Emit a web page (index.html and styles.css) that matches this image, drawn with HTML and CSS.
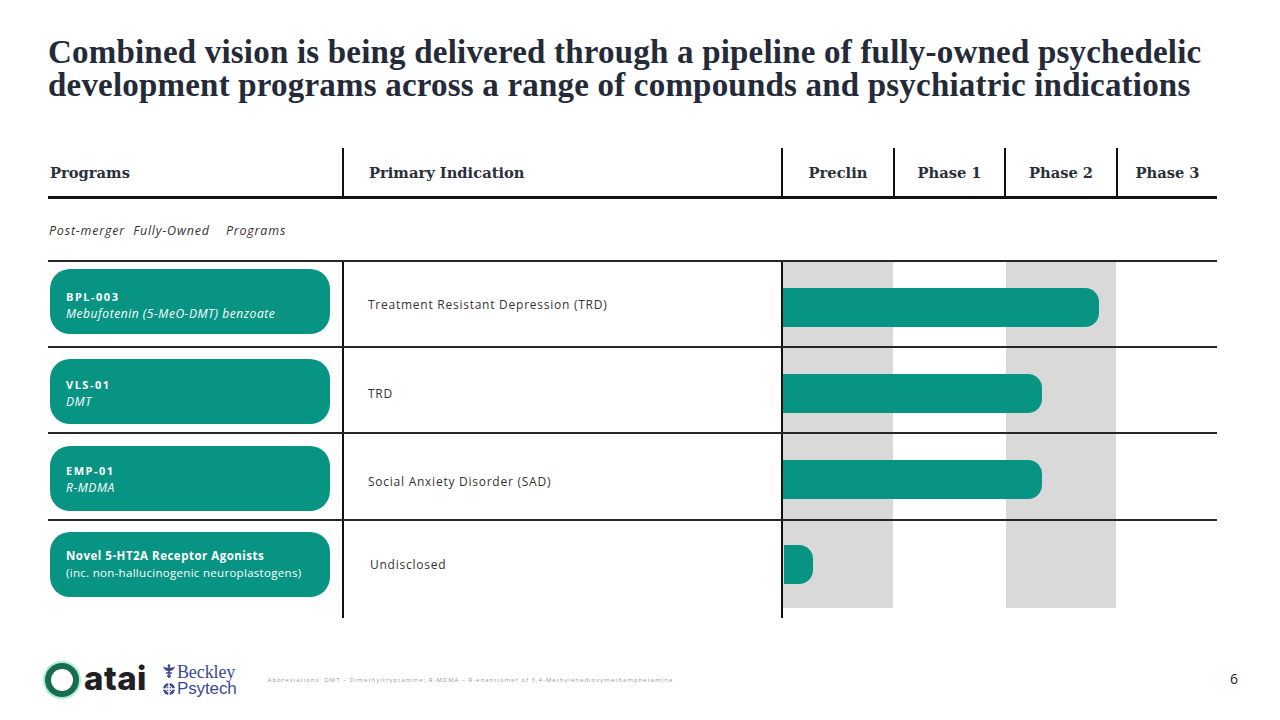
FILE: index.html
```html
<!DOCTYPE html>
<html lang="en">
<head>
<meta charset="utf-8">
<title>Pipeline</title>
<link rel="stylesheet" href="styles.css">
</head>
<body>
<div class="slide">
  <header class="title-block">
    <h1 class="title">Combined vision is being delivered through a pipeline of fully-owned psychedelic development programs across a range of compounds and psychiatric indications</h1>
  </header>

  <section class="pipeline">
    <div class="thead">
      <div class="th th-prog">Programs</div>
      <div class="th th-ind">Primary Indication</div>
      <div class="th th-phase">Preclin</div>
      <div class="th th-phase">Phase 1</div>
      <div class="th th-phase">Phase 2</div>
      <div class="th th-phase">Phase 3</div>
    </div>

    <div class="subhead">Post-merger&nbsp; Fully-Owned&nbsp;&nbsp;&nbsp; Programs</div>

    <div class="row r1">
      <div class="prog"><div class="pill"><span class="code">BPL-003</span><span class="desc">Mebufotenin (5-MeO-DMT) benzoate</span></div></div>
      <div class="ind">Treatment Resistant Depression (TRD)</div>
      <div class="stage">
        <div class="col shade"></div><div class="col"></div><div class="col shade"></div><div class="col"></div>
        <div class="bar" style="width:316px"></div>
      </div>
    </div>

    <div class="row r2">
      <div class="prog"><div class="pill"><span class="code">VLS-01</span><span class="desc">DMT</span></div></div>
      <div class="ind">TRD</div>
      <div class="stage">
        <div class="col shade"></div><div class="col"></div><div class="col shade"></div><div class="col"></div>
        <div class="bar" style="width:259px"></div>
      </div>
    </div>

    <div class="row r3">
      <div class="prog"><div class="pill"><span class="code">EMP-01</span><span class="desc">R-MDMA</span></div></div>
      <div class="ind">Social Anxiety Disorder (SAD)</div>
      <div class="stage">
        <div class="col shade"></div><div class="col"></div><div class="col shade"></div><div class="col"></div>
        <div class="bar" style="width:259px"></div>
      </div>
    </div>

    <div class="row r4">
      <div class="prog"><div class="pill"><span class="code code-plain">Novel 5-HT2A Receptor Agonists</span><span class="desc desc-plain">(inc. non-hallucinogenic neuroplastogens)</span></div></div>
      <div class="ind">Undisclosed</div>
      <div class="stage">
        <div class="col shade"></div><div class="col"></div><div class="col shade"></div><div class="col"></div>
        <div class="bar bar-small" style="width:29px"></div>
      </div>
    </div>

    <div class="tail">
      <div></div><div class="tail-cell"></div><div class="tail-cell"></div>
    </div>
  </section>

  <footer class="footer">
    <div class="atai">
      <svg class="atai-mark" width="38" height="38" viewBox="0 0 38 38" aria-hidden="true">
        <circle cx="19" cy="19" r="15" fill="none" stroke="#5fe0a8" stroke-width="8" opacity="0.55"/>
        <circle cx="19" cy="19" r="14" fill="none" stroke="#1b6a52" stroke-width="6"/>
      </svg>
      <span class="atai-word">atai</span>
    </div>
    <div class="beckley">
      <div class="bk-line">
        <svg class="bk-emblem" width="14" height="15" viewBox="0 0 14 15" aria-hidden="true">
          <path d="M1 2 C3 4 5 4 7 3 C9 4 11 4 13 2 C12 6 10 7 7 7 C4 7 2 6 1 2 Z" fill="#3b4a92"/>
          <path d="M7 1 V14 M4 9 H10 M5 12 H9" stroke="#3b4a92" stroke-width="1.6" fill="none"/>
          <circle cx="7" cy="1.5" r="1.3" fill="#3b4a92"/>
        </svg>
        <span class="bk-serif">Beckley</span>
      </div>
      <div class="bk-line">
        <svg class="bk-globe" width="14" height="14" viewBox="0 0 14 14" aria-hidden="true">
          <circle cx="7" cy="7" r="6" fill="#3b4a92"/>
          <path d="M1 7 H13 M7 1 V13" stroke="#fff" stroke-width="1.4"/>
          <circle cx="7" cy="7" r="3" fill="none" stroke="#fff" stroke-width="1"/>
        </svg>
        <span class="bk-sans">Psytech</span>
      </div>
    </div>
    <p class="abbrev">Abbreviations: DMT – Dimethyltryptamine; R-MDMA – R-enantiomer of 3,4-Methylenedioxymethamphetamine</p>
    <span class="pagenum">6</span>
  </footer>
</div>
</body>
</html>
```

FILE: styles.css
```css
* { box-sizing: border-box; }
html, body { margin: 0; padding: 0; background: #fff; }

.slide {
  width: 1280px;
  height: 720px;
  position: relative;
  display: flex;
  flex-direction: column;
  overflow: hidden;
  background: #fff;
}

.title-block {
  height: 148px;
  padding: 36px 0 0 48px;
}
.title {
  margin: 0;
  width: 1220px;
  font-family: "Liberation Serif", "Times New Roman", serif;
  font-weight: 700;
  font-size: 33px;
  line-height: 33px;
  letter-spacing: 0.2px;
  color: #252a38;
}

.pipeline {
  margin-left: 48px;
  width: 1169px;
}

.thead {
  display: grid;
  grid-template-columns: 294px 439px 112px 111px 112px 101px;
  height: 51px;
  border-bottom: 3px solid #111;
}
.th {
  display: flex;
  align-items: center;
  font-family: "DejaVu Serif", Georgia, serif;
  font-weight: 700;
  font-size: 14.7px;
  color: #2b2f3a;
  padding-top: 1px;
}
.th-prog { padding-left: 2px; }
.th-ind { border-left: 2px solid #111; padding-left: 25px; }
.th-phase { border-left: 2px solid #111; justify-content: center; }

.subhead {
  height: 61px;
  display: flex;
  align-items: center;
  padding-left: 1px;
  font-family: "Open Sans", "Liberation Sans", sans-serif;
  font-style: italic;
  font-size: 12.5px;
  letter-spacing: 0.8px;
  color: #333;
  padding-top: 1px;
}

.row {
  display: grid;
  grid-template-columns: 294px 439px 436px;
  border-top: 2px solid #262626;
  height: 86px;
}
.r3 { height: 87px; }
.r4 { height: 89px; }

.prog {
  display: flex;
  align-items: center;
  padding-left: 2px;
}
.pill {
  width: 280px;
  height: 65px;
  border-radius: 20px;
  background: #079483;
  color: #fff;
  display: flex;
  flex-direction: column;
  justify-content: center;
  padding-left: 16px;
  padding-top: 2px;
  font-family: "Open Sans", "Liberation Sans", sans-serif;
}
.r1 .pill { margin-top: -5px; padding-top: 8px; }
.r2 .pill, .r3 .pill { margin-top: 3px; padding-top: 3px; }
.r4 .pill { margin-top: 0; padding-top: 0; }
.code {
  font-weight: 700;
  font-size: 11px;
  letter-spacing: 1.5px;
  line-height: 16px;
}
.desc {
  font-style: italic;
  font-size: 12px;
  letter-spacing: 0.55px;
  line-height: 17px;
}
.code-plain { letter-spacing: 0.5px; font-size: 11.5px; }
.desc-plain { font-style: normal; letter-spacing: 0.3px; font-size: 11.5px; }

.ind {
  border-left: 2px solid #111;
  display: flex;
  align-items: center;
  padding-left: 24px;
  font-family: "Open Sans", "Liberation Sans", sans-serif;
  font-size: 12px;
  letter-spacing: 0.75px;
  color: #333;
}
.r2 .ind { padding-top: 6px; }
.r3 .ind { padding-top: 10px; }
.r4 .ind { padding-left: 26px; padding-top: 0; }

.stage {
  border-left: 2px solid #111;
  display: grid;
  grid-template-columns: 110px 113px 110px 1fr;
}
.col { grid-row: 1; }
.col:nth-child(1) { grid-column: 1; }
.col:nth-child(2) { grid-column: 2; }
.col:nth-child(3) { grid-column: 3; }
.col:nth-child(4) { grid-column: 4; }
.shade { background: #d9d9d9; }

.bar {
  grid-row: 1;
  grid-column: 1 / -1;
  align-self: center;
  height: 39px;
  margin-top: 6px;
  background: #079483;
  border-radius: 0 14px 14px 0;
}
.bar-small { margin-left: 1px; margin-top: 0; }

.tail {
  display: grid;
  grid-template-columns: 294px 439px 436px;
  height: 10px;
}
.tail-cell { border-left: 2px solid #111; }

.footer {
  margin-top: auto;
  height: 58px;
  padding: 0 0 22px 43px;
  display: flex;
  align-items: center;
}
.atai {
  display: flex;
  align-items: center;
  gap: 3px;
}
.atai-word {
  font-family: Inter, "Liberation Sans", sans-serif;
  font-weight: 800;
  font-size: 33px;
  letter-spacing: 0.5px;
  color: #1f2024;
  line-height: 1;
  margin-top: -4px;
}
.beckley {
  margin-left: 15px;
  display: flex;
  flex-direction: column;
  gap: 1px;
  color: #3b4a92;
}
.bk-line {
  display: flex;
  align-items: center;
  height: 16px;
}
.bk-emblem, .bk-globe { margin-right: 1px; }
.bk-serif {
  font-family: "Liberation Serif", serif;
  font-size: 18px;
  letter-spacing: -0.1px;
  line-height: 14px;
}
.bk-sans {
  font-family: "Liberation Sans", sans-serif;
  font-size: 17px;
  letter-spacing: -0.1px;
  line-height: 14px;
}
.abbrev {
  margin: 0 0 0 31px;
  font-family: "Open Sans", "Liberation Sans", sans-serif;
  font-size: 6px;
  letter-spacing: 1px;
  color: #9a9a9a;
}
.pagenum {
  margin-left: auto;
  margin-right: 42px;
  font-family: "Open Sans", "Liberation Sans", sans-serif;
  font-size: 14px;
  color: #222;
  margin-top: -4px;
}
```
